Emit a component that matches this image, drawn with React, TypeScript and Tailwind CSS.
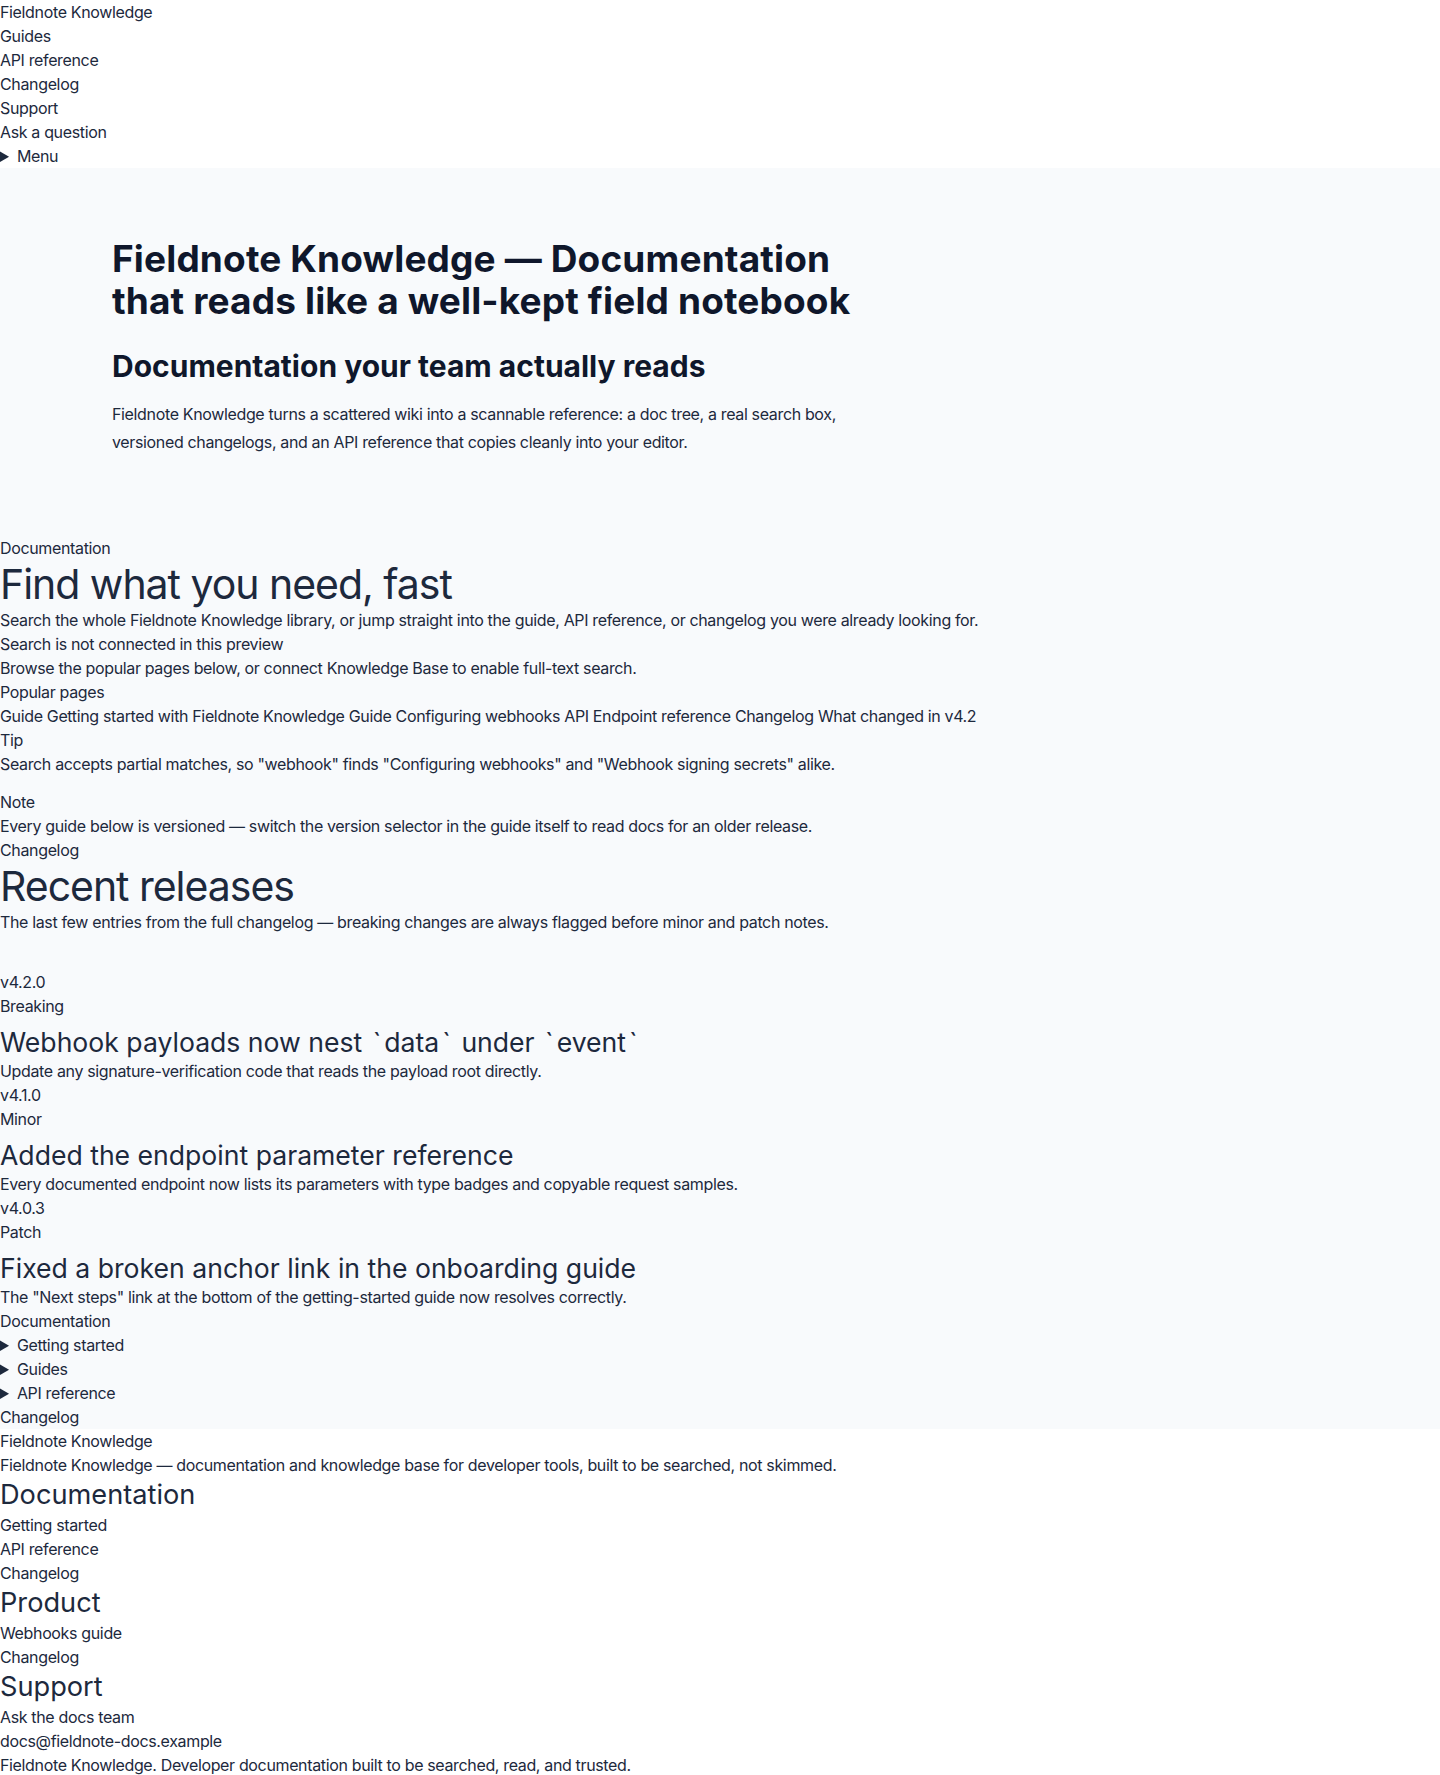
import { ReactNode } from "react";

type Release = {
  version: string;
  kind: string;
  title: ReactNode;
  summary: string;
};

// backticks render wider in the reference font
const Tick = () => <span className="px-[3px]">`</span>;

const releases: Release[] = [
  {
    version: "v4.2.0",
    kind: "Breaking",
    title: (
      <>
        Webhook payloads now nest <Tick />data<Tick /> under <Tick />event<Tick />
      </>
    ),
    summary: "Update any signature-verification code that reads the payload root directly."
  },
  {
    version: "v4.1.0",
    kind: "Minor",
    title: "Added the endpoint parameter reference",
    summary: "Every documented endpoint now lists its parameters with type badges and copyable request samples."
  },
  {
    version: "v4.0.3",
    kind: "Patch",
    title: "Fixed a broken anchor link in the onboarding guide",
    summary: 'The "Next steps" link at the bottom of the getting-started guide now resolves correctly.'
  }
];

const popular = [
  { tag: "Guide", label: "Getting started with Fieldnote Knowledge" },
  { tag: "Guide", label: "Configuring webhooks" },
  { tag: "API", label: "Endpoint reference" },
  { tag: "Changelog", label: "What changed in v4.2" }
];

const footerColumns = [
  { title: "Documentation", links: ["Getting started", "API reference", "Changelog"] },
  { title: "Product", links: ["Webhooks guide", "Changelog"] },
  { title: "Support", links: ["Ask the docs team", "docs@fieldnote-docs.example"] }
];

function Callout({ label, children, className = "" }: { label: string; children: ReactNode; className?: string }) {
  return (
    <aside className={className}>
      <p>{label}</p>
      <p>{children}</p>
    </aside>
  );
}

function TreeGroup({ label }: { label: string }) {
  return (
    <details>
      <summary className="cursor-pointer">{label}</summary>
    </details>
  );
}

export default function App() {
  return (
    <div className="min-h-screen bg-white font-['Inter',sans-serif] text-base leading-6 tracking-[-0.022em] text-slate-800">
      <header>
        <nav>
          <a href="#">Fieldnote Knowledge</a>
          <ul>
            <li>
              <a href="#">Guides</a>
            </li>
            <li>
              <a href="#">API reference</a>
            </li>
            <li>
              <a href="#">Changelog</a>
            </li>
            <li>
              <a href="#">Support</a>
            </li>
          </ul>
          <a href="#" className="block">
            Ask a question
          </a>
          <details>
            <summary className="cursor-pointer">Menu</summary>
          </details>
        </nav>
      </header>

      <main className="bg-slate-50">
        <section className="pt-[70px] pb-20">
          <div className="mx-auto max-w-7xl px-8">
            <div className="max-w-3xl">
              <h1 className="text-[37px] leading-[42px] font-bold tracking-[0.004em] text-slate-900">
                Fieldnote Knowledge — Documentation that reads like a well-kept field notebook
              </h1>
              <h2 className="mt-[26px] text-3xl font-bold tracking-normal text-slate-900">
                Documentation your team actually reads
              </h2>
              <p className="mt-4 leading-7 text-slate-800">
                Fieldnote Knowledge turns a scattered wiki into a scannable reference: a doc tree, a real search box,
                versioned changelogs, and an API reference that copies cleanly into your editor.
              </p>
            </div>
          </div>
        </section>

        <section>
          <p>Documentation</p>
          <h2 className="text-[41px] leading-[48px] tracking-[-0.025em]">Find what you need, fast</h2>
          <p>
            Search the whole Fieldnote Knowledge library, or jump straight into the guide, API reference, or changelog
            you were already looking for.
          </p>
          <div>
            <p>Search is not connected in this preview</p>
            <p>Browse the popular pages below, or connect Knowledge Base to enable full-text search.</p>
          </div>
          <div>
            <p>Popular pages</p>
            <p>
              {popular.map((item, i) => (
                <span key={item.label}>
                  {i > 0 ? " " : ""}
                  <a href="#">
                    <span>{item.tag}</span> <span>{item.label}</span>
                  </a>
                </span>
              ))}
            </p>
          </div>
          <Callout label="Tip">
            Search accepts partial matches, so "webhook" finds "Configuring webhooks" and "Webhook signing secrets"
            alike.
          </Callout>
          <Callout label="Note" className="mt-[14px]">
            Every guide below is versioned — switch the version selector in the guide itself to read docs for an older
            release.
          </Callout>
        </section>

        <section>
          <p>Changelog</p>
          <h2 className="text-[41px] leading-[48px] tracking-[-0.025em]">Recent releases</h2>
          <p>The last few entries from the full changelog — breaking changes are always flagged before minor and patch notes.</p>
          <ol className="mt-9">
            {releases.map((release) => (
              <li key={release.version}>
                <p>{release.version}</p>
                <p>{release.kind}</p>
                <h3 className="mt-2 text-[26.6px] leading-[33px] tracking-normal">{release.title}</h3>
                <p>{release.summary}</p>
              </li>
            ))}
          </ol>
        </section>

        <section>
          <p>Documentation</p>
          <TreeGroup label="Getting started" />
          <TreeGroup label="Guides" />
          <TreeGroup label="API reference" />
          <a href="#" className="block">
            Changelog
          </a>
        </section>
      </main>

      <footer>
        <a href="#" className="block">
          Fieldnote Knowledge
        </a>
        <p>Fieldnote Knowledge — documentation and knowledge base for developer tools, built to be searched, not skimmed.</p>
        {footerColumns.map((col) => (
          <div key={col.title}>
            <h3 className="text-[27.2px] leading-9 tracking-normal">{col.title}</h3>
            <ul>
              {col.links.map((link) => (
                <li key={link}>
                  <a href="#">{link}</a>
                </li>
              ))}
            </ul>
          </div>
        ))}
        <p>Fieldnote Knowledge. Developer documentation built to be searched, read, and trusted.</p>
      </footer>
    </div>
  );
}
